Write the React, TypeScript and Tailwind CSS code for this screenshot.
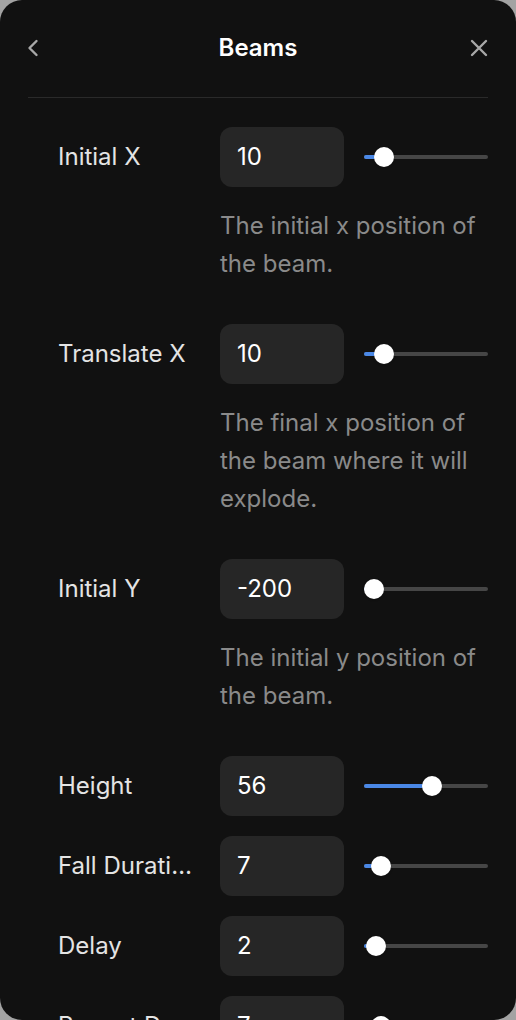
import React from "react";

type Param = { label: string; value: string; pct: number; desc?: string };

const PARAMS: Param[] = [
  { label: "Initial X", value: "10", pct: 10, desc: "The initial x position of the beam." },
  { label: "Translate X", value: "10", pct: 10, desc: "The final x position of the beam where it will explode." },
  { label: "Initial Y", value: "-200", pct: 0, desc: "The initial y position of the beam." },
  { label: "Height", value: "56", pct: 56 },
  { label: "Fall Duration", value: "7", pct: 7 },
  { label: "Delay", value: "2", pct: 2 },
  { label: "Repeat Delay", value: "7", pct: 7 },
];

function Slider({ pct }: { pct: number }) {
  // thumb center travels from 10px to (width - 10px)
  const left = `calc(10px + (100% - 20px) * ${pct / 100})`;
  return (
    <div className="relative ml-5 flex-1 h-5">
      <div className="absolute left-0 right-0 top-1/2 -translate-y-1/2 h-1 rounded-full bg-[#464646]" />
      <div className="absolute left-0 top-1/2 -translate-y-1/2 h-1 rounded-full bg-[#4a88e6]" style={{ width: left }} />
      <div className="absolute top-1/2 -translate-x-1/2 -translate-y-1/2 w-5 h-5 rounded-full bg-white shadow" style={{ left }} />
    </div>
  );
}

function Row({ p }: { p: Param }) {
  return (
    <div>
      <div className="flex items-center pl-[30px]">
        <div className="w-[136px] mr-[26px] truncate text-[24px] text-[#e4e4e4]">{p.label}</div>
        <div className="w-[124px] h-[60px] shrink-0 rounded-xl bg-[#262626] flex items-center px-[17px] text-[24px] text-white">
          {p.value}
        </div>
        <Slider pct={p.pct} />
      </div>
      {p.desc && (
        <p className="ml-[192px] mt-5 mb-[21px] text-[24px] leading-[38px] text-[#8a8a8a]">{p.desc}</p>
      )}
    </div>
  );
}

export default function App() {
  return (
    <div className="w-[516px] h-[1020px] bg-[#a3a3a3]" style={{ fontFamily: "Inter, 'Noto Sans', sans-serif" }}>
      <div className="h-full rounded-[22px] bg-[#111111] overflow-hidden px-[28px]">
        <div className="pt-5 h-[76px] flex items-center justify-between">
          <div className="w-5 flex">
            <svg width="12" height="18" viewBox="0 0 12 18" fill="none" className="text-[#a8a8a8] -ml-px">
              <path d="M9.5 2 L2.5 9 L9.5 16" stroke="currentColor" strokeWidth="2.4" strokeLinecap="round" strokeLinejoin="round" />
            </svg>
          </div>
          <div className="text-[24px] font-semibold text-white">Beams</div>
          <div className="w-5 flex justify-end">
            <svg width="18" height="18" viewBox="0 0 18 18" fill="none" className="text-[#a8a8a8]">
              <path d="M2 2 L16 16 M16 2 L2 16" stroke="currentColor" strokeWidth="2.4" strokeLinecap="round" />
            </svg>
          </div>
        </div>
        <div className="mt-[21px] h-px bg-[#2a2a2a]" />
        <div className="pt-[29px] flex flex-col gap-5">
          {PARAMS.map((p) => (
            <Row key={p.label} p={p} />
          ))}
        </div>
      </div>
    </div>
  );
}
